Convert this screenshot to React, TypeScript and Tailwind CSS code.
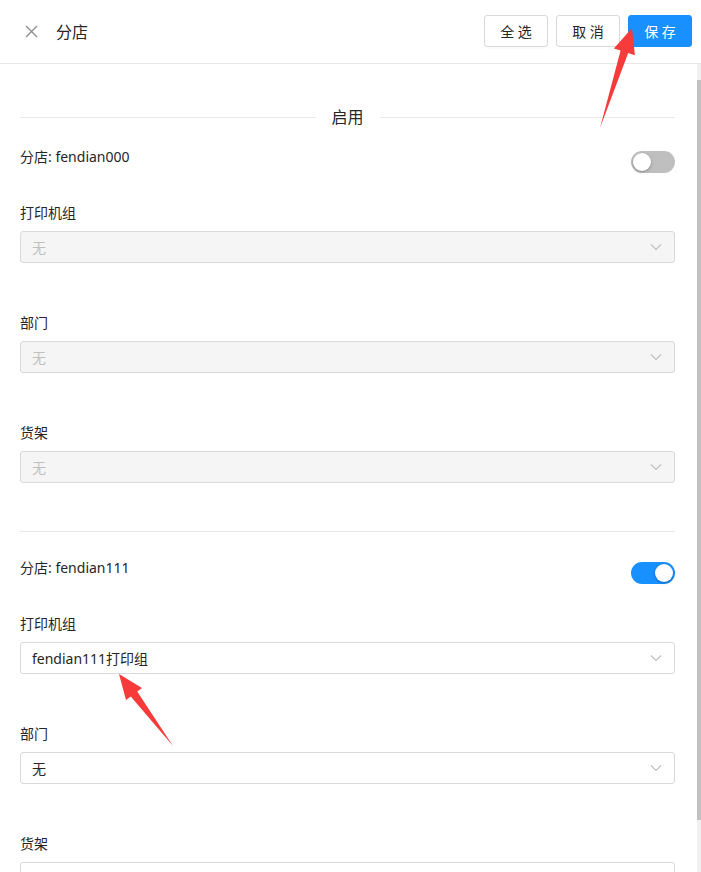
import React from "react";

const FONT = { fontFamily: '"Noto Sans", "Noto Sans CJK SC", sans-serif' };

function Chevron() {
  return (
    <svg width="12" height="12" viewBox="0 0 12 12" className="shrink-0">
      <polyline points="1,3.5 6,8.5 11,3.5" fill="none" stroke="#bfbfbf" strokeWidth="1.1" />
    </svg>
  );
}

function Select({ value, disabled }: { value: string; disabled?: boolean }) {
  return (
    <div
      className={
        "h-[32px] rounded-[3px] border flex items-center justify-between pl-[11px] pr-[12px] text-[14px] " +
        (disabled
          ? "bg-[#f5f5f5] border-[#d9d9d9] text-[#bfbfbf]"
          : "bg-white border-[#d9d9d9] text-[#262626]")
      }
    >
      <span>{value}</span>
      <Chevron />
    </div>
  );
}

function Field({ label, value, disabled, last }: { label: string; value: string; disabled?: boolean; last?: boolean }) {
  return (
    <div className={last ? "" : "mb-[49px]"}>
      <div className="h-[22px] leading-[22px] text-[14px] text-[#262626] mb-[7px]">{label}</div>
      <Select value={value} disabled={disabled} />
    </div>
  );
}

function Toggle({ on }: { on: boolean }) {
  return (
    <div
      className={
        "mt-[5px] w-[44px] h-[22px] rounded-full flex items-center px-[2px] " +
        (on ? "bg-[#1890ff] justify-end" : "bg-[#bfbfbf] justify-start")
      }
    >
      <div className="w-[18px] h-[18px] rounded-full bg-white shadow-[0_1px_3px_rgba(0,0,0,0.3)]" />
    </div>
  );
}

function StoreRow({ name, on }: { name: string; on: boolean }) {
  return (
    <div className="flex justify-between items-start mb-[29px]">
      <div className="h-[22px] leading-[22px] text-[14px] text-[#262626]">分店: {name}</div>
      <Toggle on={on} />
    </div>
  );
}

export default function App() {
  return (
    <div className="relative w-[701px] h-[872px] overflow-hidden bg-white flex flex-col" style={FONT}>
      <div className="h-[64px] shrink-0 border-b border-[#e8e8e8] flex items-center justify-between pl-[25px] pr-[9px]">
        <div className="flex items-center">
          <svg width="13" height="13" viewBox="0 0 13 13" className="mr-[18px]">
            <path d="M1 1 L12 12 M12 1 L1 12" stroke="#8c8c8c" strokeWidth="1.3" fill="none" />
          </svg>
          <span className="text-[16px] text-[#262626]">分店</span>
        </div>
        <div className="flex items-center gap-[8px] mt-[-1px]">
          <button className="w-[64px] h-[32px] rounded-[3px] border border-[#d9d9d9] bg-white text-[14px] text-[#262626] shadow-[0_2px_0_rgba(0,0,0,0.015)]">全 选</button>
          <button className="w-[64px] h-[32px] rounded-[3px] border border-[#d9d9d9] bg-white text-[14px] text-[#262626]">取 消</button>
          <button className="w-[64px] h-[32px] rounded-[3px] border border-[#1890ff] bg-[#1890ff] text-[14px] text-white">保 存</button>
        </div>
      </div>
      <div className="flex flex-1 min-h-0">
        <div className="flex-1 pl-[20px] pr-[22px] pt-[41px]">
          <div className="flex items-center h-[24px] mb-[17px]">
            <div className="flex-1 h-px bg-[#e8e8e8]" />
            <span className="px-[16px] text-[16px] text-[#262626]">启用</span>
            <div className="flex-1 h-px bg-[#e8e8e8]" />
          </div>
          <StoreRow name="fendian000" on={false} />
          <Field label="打印机组" value="无" disabled />
          <Field label="部门" value="无" disabled />
          <Field label="货架" value="无" disabled last />
          <div className="h-px bg-[#e8e8e8] mt-[48px] mb-[25px]" />
          <StoreRow name="fendian111" on={true} />
          <Field label="打印机组" value="fendian111打印组" />
          <Field label="部门" value="无" />
          <Field label="货架" value="无" last />
        </div>
        <div className="w-[4px] bg-[#f1f1f1] shrink-0">
          <div className="mt-[16px] h-[740px] bg-[#c1c1c1]" />
        </div>
      </div>
      <svg className="absolute left-0 top-0 pointer-events-none" width="701" height="872" viewBox="0 0 701 872">
        <polygon
          points="600,128 620.6,50.6 613.9,48.4 632,28 634.9,55.2 628.2,53 600,128"
          fill="#f73a3a"
        />
        <polygon
          points="173,746 130.8,696.4 126,700 119,674 142,688 137.2,691.6 173,746"
          fill="#f73a3a"
        />
      </svg>
    </div>
  );
}
